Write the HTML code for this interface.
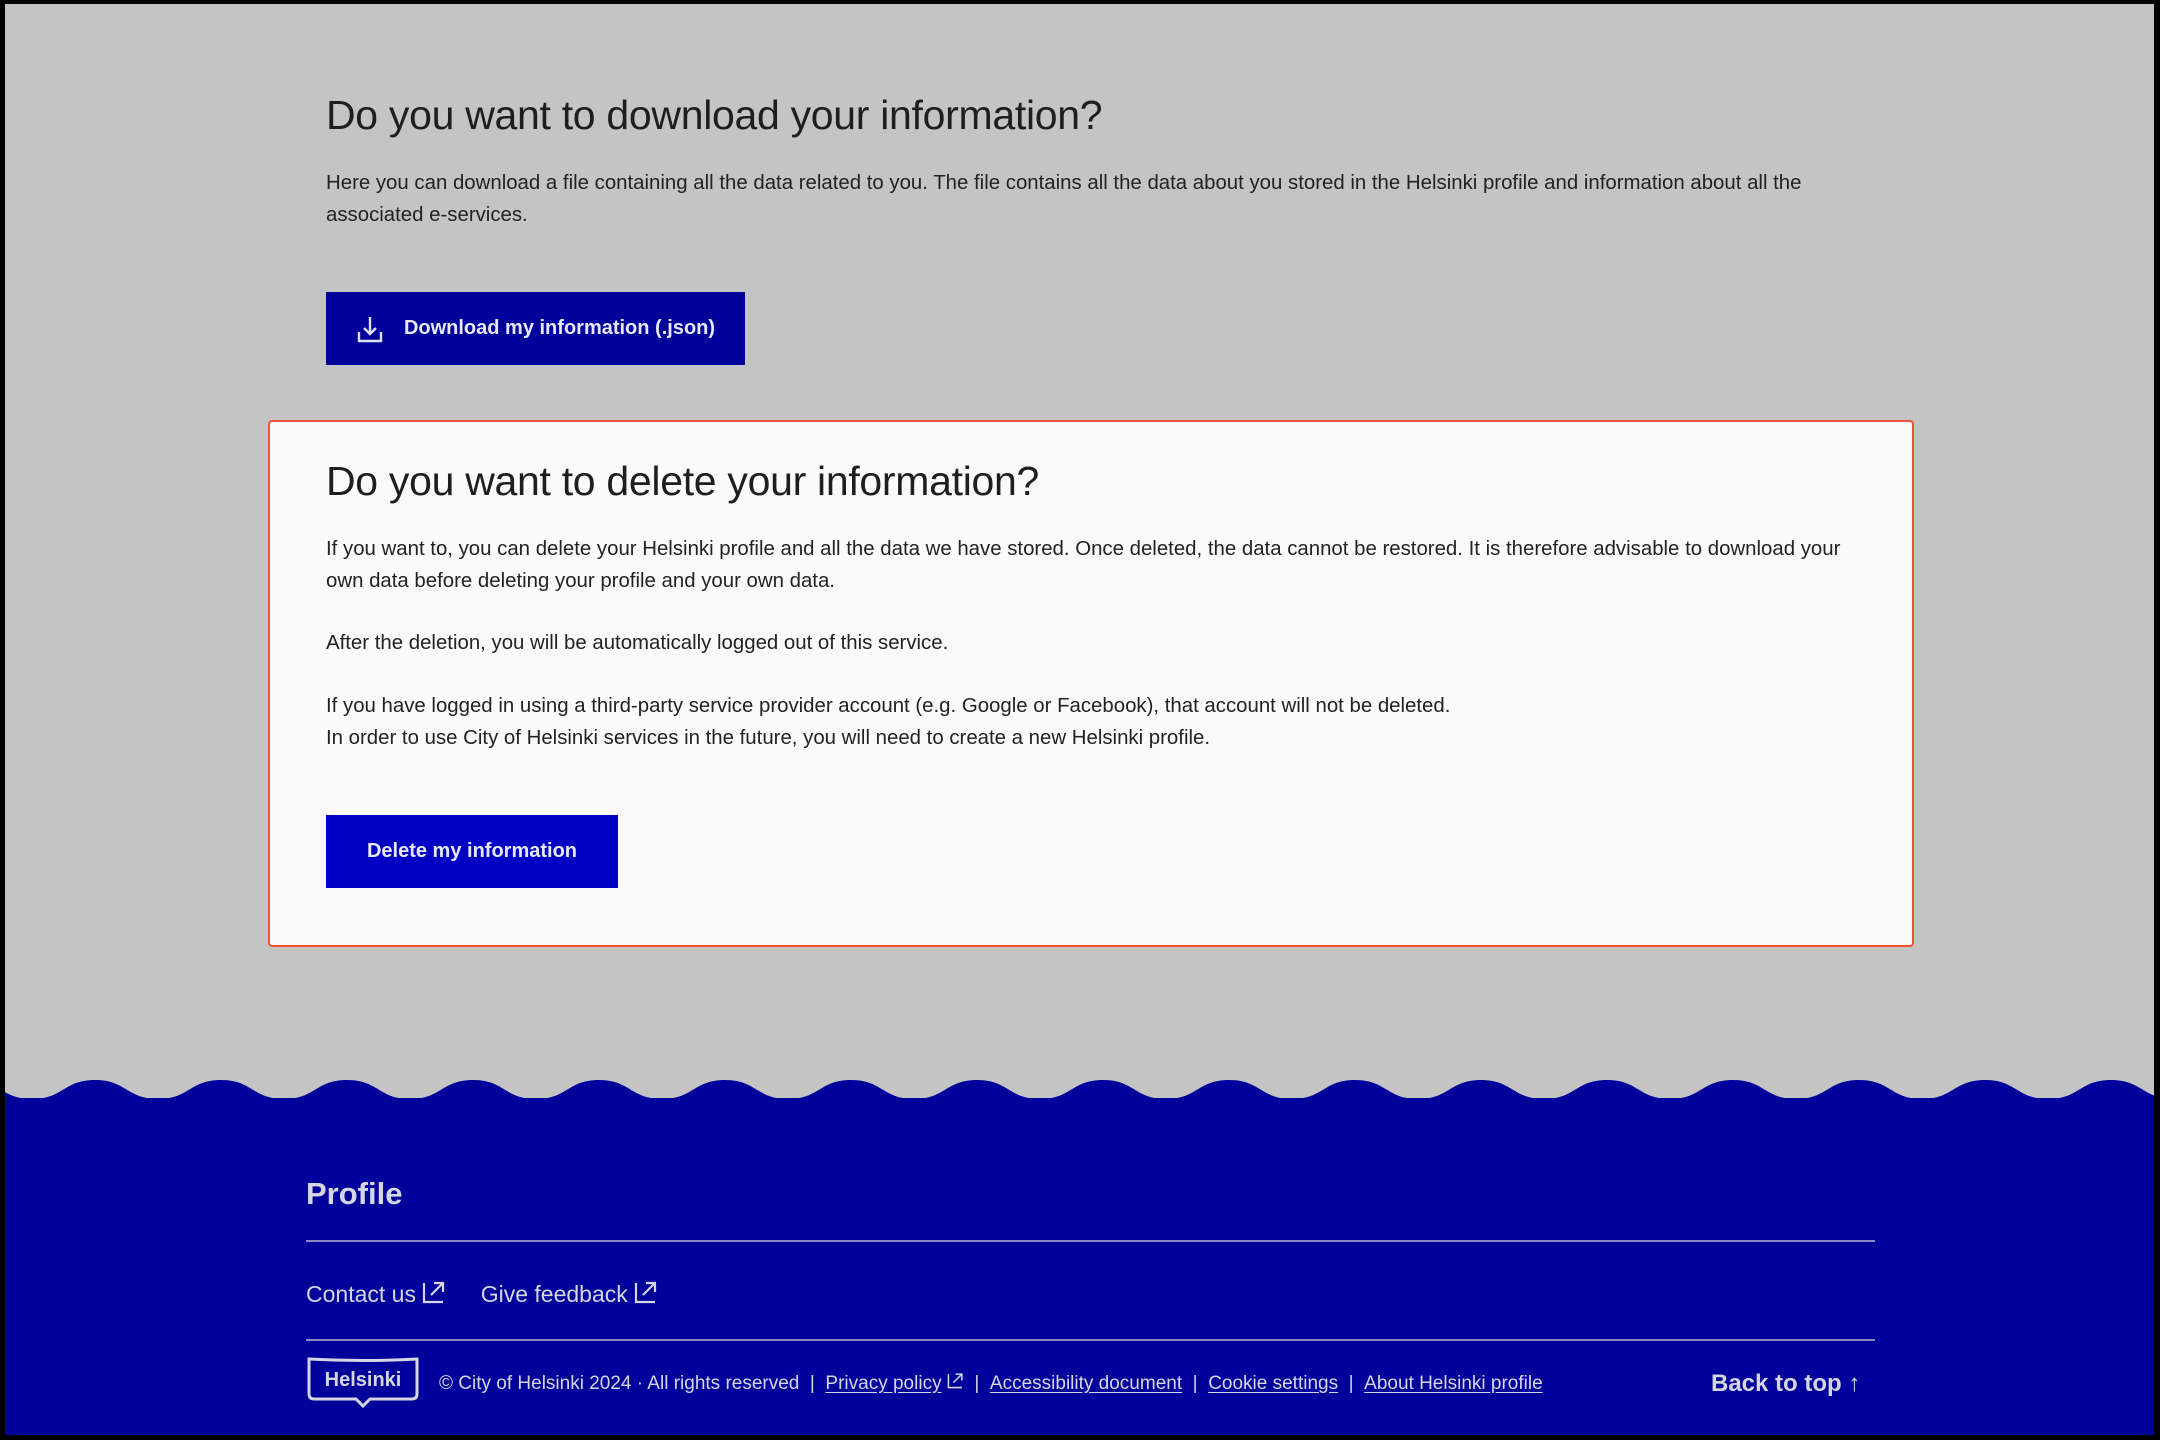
<!DOCTYPE html>
<html><head><meta charset="utf-8"><style>
*{margin:0;padding:0;box-sizing:border-box}
html,body{width:2160px;height:1440px;overflow:hidden;background:#000}
body{position:relative;font-family:"Liberation Sans",sans-serif}
.page{position:absolute;left:5px;top:4px;width:2149px;height:1431px;background:#c4c4c4;overflow:hidden}
.a{position:absolute;white-space:nowrap}
h1,h2{font-weight:400;color:#1e1e1e;font-size:41px;letter-spacing:-0.3px}
p{font-size:20.4px;color:#222;line-height:32px}
.btn{position:absolute;color:#e8e8f4;font-weight:700;font-size:20px;display:flex;align-items:center;justify-content:center}
.box{position:absolute;left:263px;top:416px;width:1646px;height:527px;background:#fafafa;border:2px solid #f0533a;border-radius:4px}
.foot{position:absolute;left:0;top:1094px;width:100%;height:400px;background:#00009b}
.ft{color:#d6d6e2}
.ln{position:absolute;left:301px;width:1569px;height:2px;background:#8a8ac0}
.sm{font-size:19px;color:#d6d6e2}
.sm u{text-underline-offset:3px}
</style></head><body><div class="page">
<h1 class="a" style="left:321px;top:88px">Do you want to download your information?</h1>
<p class="a" style="left:321px;top:163px">Here you can download a file containing all the data related to you. The file contains all the data about you stored in the Helsinki profile and information about all the<br>associated e-services.</p>
<div class="btn" style="left:321px;top:288px;width:419px;height:73px;background:#00009a">
<svg width="28" height="28" viewBox="0 0 28 28" style="margin-right:20px" fill="none" stroke="#e0e0ee" stroke-width="2.4"><path d="M14 2v17M8 13l6 6 6-6M3 17v9h22v-9"/></svg>Download my information (.json)</div>
<div class="box"></div>
<h2 class="a" style="left:321px;top:454px">Do you want to delete your information?</h2>
<p class="a" style="left:321px;top:529px">If you want to, you can delete your Helsinki profile and all the data we have stored. Once deleted, the data cannot be restored. It is therefore advisable to download your<br>own data before deleting your profile and your own data.</p>
<p class="a" style="left:321px;top:623px">After the deletion, you will be automatically logged out of this service.</p>
<p class="a" style="left:321px;top:686px">If you have logged in using a third-party service provider account (e.g. Google or Facebook), that account will not be deleted.<br>In order to use City of Helsinki services in the future, you will need to create a new Helsinki profile.</p>
<div class="btn" style="left:321px;top:811px;width:292px;height:73px;background:#0000c4">Delete my information</div>
<svg class="a" style="left:0;top:1070px" width="2149" height="30" viewBox="0 0 2149 30">
<path fill="#00009b" d="M-99 30 V25 c31.5 0 31.5 -19 63 -19 c31.5 0 31.5 19 63 19 c31.5 0 31.5 -19 63 -19 c31.5 0 31.5 19 63 19 c31.5 0 31.5 -19 63 -19 c31.5 0 31.5 19 63 19 c31.5 0 31.5 -19 63 -19 c31.5 0 31.5 19 63 19 c31.5 0 31.5 -19 63 -19 c31.5 0 31.5 19 63 19 c31.5 0 31.5 -19 63 -19 c31.5 0 31.5 19 63 19 c31.5 0 31.5 -19 63 -19 c31.5 0 31.5 19 63 19 c31.5 0 31.5 -19 63 -19 c31.5 0 31.5 19 63 19 c31.5 0 31.5 -19 63 -19 c31.5 0 31.5 19 63 19 c31.5 0 31.5 -19 63 -19 c31.5 0 31.5 19 63 19 c31.5 0 31.5 -19 63 -19 c31.5 0 31.5 19 63 19 c31.5 0 31.5 -19 63 -19 c31.5 0 31.5 19 63 19 c31.5 0 31.5 -19 63 -19 c31.5 0 31.5 19 63 19 c31.5 0 31.5 -19 63 -19 c31.5 0 31.5 19 63 19 c31.5 0 31.5 -19 63 -19 c31.5 0 31.5 19 63 19 c31.5 0 31.5 -19 63 -19 c31.5 0 31.5 19 63 19 c31.5 0 31.5 -19 63 -19 c31.5 0 31.5 19 63 19 c31.5 0 31.5 -19 63 -19 c31.5 0 31.5 19 63 19 c31.5 0 31.5 -19 63 -19 c31.5 0 31.5 19 63 19 V30 Z"/>
</svg>
<div class="foot"></div>
<div class="a ft" style="left:301px;top:1172px;font-size:31px;font-weight:700">Profile</div>
<div class="ln" style="top:1236px"></div>
<div class="a ft" style="left:301px;top:1276px;font-size:23px">Contact us <svg width="24" height="24" viewBox="0 0 24 24" fill="none" stroke="#d6d6e2" stroke-width="2.2" style="vertical-align:-2px"><path d="M2 3v19h19M9 15L21 3M12 3h9v9"/></svg>
<span style="margin-left:28px">Give feedback <svg width="24" height="24" viewBox="0 0 24 24" fill="none" stroke="#d6d6e2" stroke-width="2.2" style="vertical-align:-2px"><path d="M2 3v19h19M9 15L21 3M12 3h9v9"/></svg></span></div>
<div class="ln" style="top:1335px"></div>
<svg class="a" style="left:301px;top:1352px" width="114" height="56" viewBox="0 0 114 56"><path d="M3 3 Q57 6 111 3 V38 Q111 43 106 43 H64 L57 50 L50 43 H8 Q3 43 3 38 Z" fill="none" stroke="#d6d6e2" stroke-width="3"/>
<text x="57" text-anchor="middle" y="30" font-family="Liberation Sans" font-weight="700" font-size="20" fill="#d6d6e2">Helsinki</text></svg>
<div class="a sm" style="left:434px;top:1368px">© City of Helsinki 2024 · All rights reserved &nbsp;| &nbsp;<u>Privacy policy</u> <svg width="17" height="17" viewBox="0 0 24 24" fill="none" stroke="#d6d6e2" stroke-width="2.2"><path d="M2 3v19h19M9 15L21 3M12 3h9v9"/></svg> &nbsp;| &nbsp;<u>Accessibility document</u> &nbsp;| &nbsp;<u>Cookie settings</u> &nbsp;| &nbsp;<u>About Helsinki profile</u></div>
<div class="a ft" style="left:1706px;top:1366px;font-size:24px;font-weight:700">Back to top ↑</div>
</div></body></html>
